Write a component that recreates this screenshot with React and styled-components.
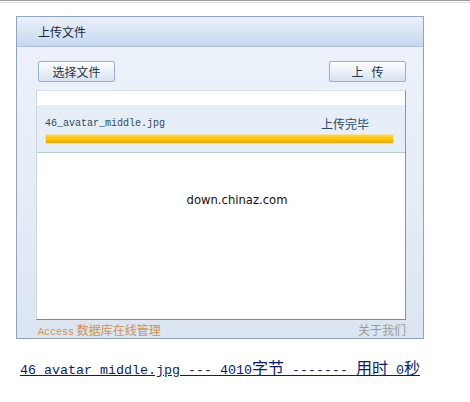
import React from "react";
import styled, { createGlobalStyle } from "styled-components";

const Global = createGlobalStyle`
  html, body { margin: 0; padding: 0; background: #fff; }
  body { font-family: "Noto Sans CJK SC", "DejaVu Sans", sans-serif; font-size: 12px; color: #000; }
`;

const TopRule = styled.div`
  height: 1px;
  border-top: 1px solid #9c9c9c;
  border-bottom: 1px solid #dcdcdc;
`;

const Page = styled.div`
  padding: 13px 0 0 16px;
`;

const Panel = styled.div`
  width: 406px;
  height: 321px;
  border: 1px solid #8fa4bd;
  background: linear-gradient(to bottom, #eef3fa 0%, #e4ecf6 60%, #dbe5f1 100%);
  display: flex;
  flex-direction: column;
`;

const Header = styled.div`
  height: 29px;
  border-bottom: 1px solid #a9bfdb;
  background: linear-gradient(to bottom, #e9f0fa 0%, #d9e5f4 50%, #c5d7ee 100%);
  display: flex;
  align-items: center;
  padding-left: 21px;
  font-size: 12px;
  color: #1b2a3a;
`;

const Toolbar = styled.div`
  display: flex;
  justify-content: space-between;
  padding: 14px 17px 0 21px;
`;

const Button = styled.div`
  width: ${(p) => (p.$wide ? "67px" : "75px")};
  height: 19px;
  border: 1px solid #9aafcc;
  border-radius: 2px;
  background: linear-gradient(to bottom, #fbfcfe 0%, #e9f0f9 55%, #d6e2f1 100%);
  display: flex;
  align-items: center;
  justify-content: center;
  font-size: 12px;
  color: #2a3440;
  letter-spacing: ${(p) => (p.$wide ? "8px" : "0")};
  padding-left: ${(p) => (p.$wide ? "8px" : "0")};
  box-sizing: content-box;
`;

const List = styled.div`
  margin: 8px 17px 0 19px;
  height: 228px;
  background: #fff;
  border-top: 1px solid #d8e2ee;
  border-left: 1px solid #c9d6e6;
  border-right: 1px solid #7d97b6;
  border-bottom: 1px solid #6f8aab;
  display: flex;
  flex-direction: column;
`;

const Spacer = styled.div`
  height: 14px;
`;

const FileRow = styled.div`
  height: 47px;
  background: #e6eef7;
  border-bottom: 1px solid #b9cce0;
  padding: 0 11px 0 8px;
  display: flex;
  flex-direction: column;
`;

const FileLine = styled.div`
  display: flex;
  justify-content: space-between;
  align-items: center;
  height: 18px;
  margin-top: 9px;
  padding-right: 25px;
`;

const FileName = styled.span`
  font-family: "Liberation Mono", "DejaVu Sans Mono", monospace;
  font-size: 10px;
  color: #2d4a63;
`;

const Status = styled.span`
  font-size: 12px;
  color: #2d4a63;
`;

const Track = styled.div`
  margin-top: 2px;
  height: 10px;
  border: 1px solid #f3e2b0;
  background: #fff;
  box-sizing: border-box;
`;

const Bar = styled.div`
  height: 100%;
  background: linear-gradient(to bottom, #ffd83a 0%, #fcc70c 45%, #f0a800 100%);
`;

const Center = styled.div`
  flex: 1;
  display: flex;
  justify-content: center;
  padding: 40px 0 0 32px;
  font-family: "DejaVu Sans", sans-serif;
  font-size: 11.6px;
  color: #111;
`;

const Footer = styled.div`
  flex: 1;
  display: flex;
  justify-content: space-between;
  align-items: center;
  padding: 0 17px 0 21px;
  font-size: 12px;
`;

const FooterLeft = styled.span`
  color: #d39147;
`;

const Mono = styled.span`
  font-family: "Liberation Mono", "DejaVu Sans Mono", monospace;
  font-size: ${(p) => p.$size || 10}px;
`;

const FooterRight = styled.span`
  color: #9a9a9a;
`;

const ResultLink = styled.a`
  display: inline-block;
  margin: 19px 0 0 4px;
  color: #0b1a7a;
  text-decoration: underline;
  font-size: 16px;
  line-height: 18px;
  white-space: pre;
`;

export default function App() {
  return (
    <>
      <Global />
      <TopRule />
      <Page>
        <Panel>
          <Header>上传文件</Header>
          <Toolbar>
            <Button>选择文件</Button>
            <Button $wide>上传</Button>
          </Toolbar>
          <List>
            <Spacer />
            <FileRow>
              <FileLine>
                <FileName>46_avatar_middle.jpg</FileName>
                <Status>上传完毕</Status>
              </FileLine>
              <Track>
                <Bar style={{ width: "100%" }} />
              </Track>
            </FileRow>
            <Center>down.chinaz.com</Center>
          </List>
          <Footer>
            <FooterLeft>
              <Mono>Access</Mono> 数据库在线管理
            </FooterLeft>
            <FooterRight>关于我们</FooterRight>
          </Footer>
        </Panel>
        <ResultLink href="#">
          <Mono $size={13.33}>46_avatar_middle.jpg --- 4010</Mono>字节
          <Mono $size={13.33}> ------- </Mono>用时<Mono $size={13.33}> 0</Mono>秒
        </ResultLink>
      </Page>
    </>
  );
}
